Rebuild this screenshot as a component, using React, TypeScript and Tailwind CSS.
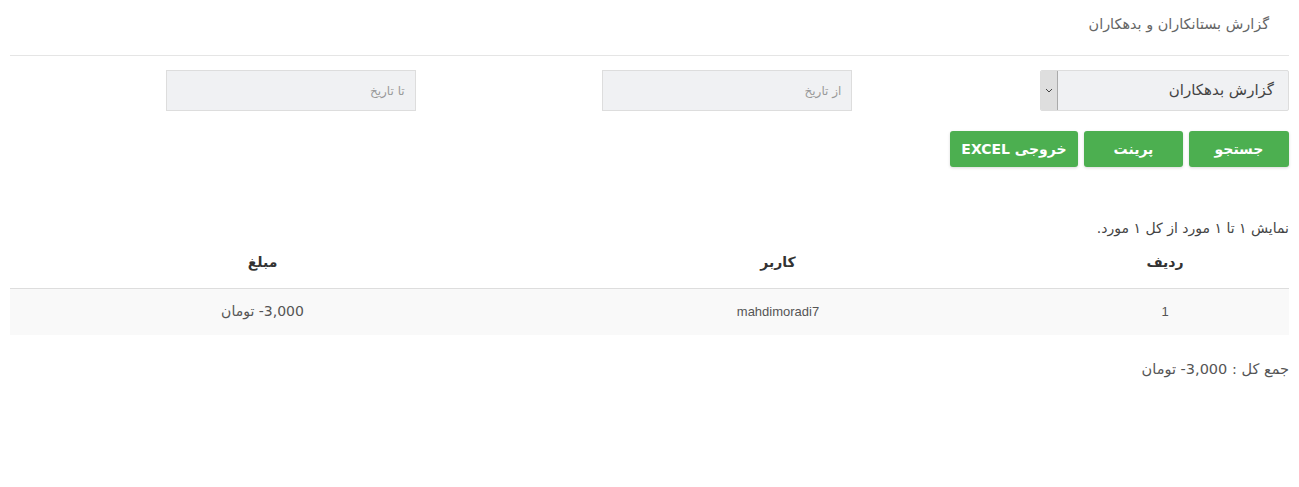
const fa = "font-['DejaVu_Sans','Noto_Sans',sans-serif]";

const rows = [{ id: "1", user: "mahdimoradi7", amount: "3,000- تومان" }];

export default function App() {
  return (
    <div dir="rtl" className={`min-h-[487px] bg-white px-[10px] text-[#555] ${fa}`}>
      <div className="px-[20px] pt-[14px] pb-[21px] text-[14.4px] leading-[20px] text-[#666]">
        گزارش بستانکاران و بدهکاران
      </div>
      <div className="border-t border-[#e5e5e5]" />

      <div className="mt-[14px] grid grid-cols-3 gap-x-[31px]">
        <div className="flex h-[41px] w-[249px] overflow-hidden rounded-[2px] border border-[#ddd] bg-[#f0f1f3]">
          <div className="flex flex-1 items-center pr-[14px] text-[15px] text-[#444]">گزارش بدهکاران</div>
          <div className="flex w-[17px] items-center justify-center border-r border-[#aaa] bg-[#dedede]">
            <svg width="8" height="5" viewBox="0 0 8 5">
              <path d="M1 1l3 3 3-3" fill="none" stroke="#444" strokeWidth="1" />
            </svg>
          </div>
        </div>
        <div className="flex h-[41px] w-[250px] items-center border border-[#ddd] bg-[#f0f1f3] pr-[10px] text-[12px] text-[#999]">
          از تاریخ
        </div>
        <div className="flex h-[41px] w-[250px] items-center border border-[#ddd] bg-[#f0f1f3] pr-[10px] text-[12px] text-[#999]">
          تا تاریخ
        </div>
      </div>

      <div className="mt-[20px] flex gap-[6px]">
        {[
          ["جستجو", "w-[100px]"],
          ["پرینت", "w-[99px]"],
          ["خروجی EXCEL", "w-[128px]"],
        ].map(([label, w]) => (
          <button
            key={label}
            className={`${w} h-[36px] rounded-[3px] bg-[#4caf50] text-[14px] font-bold text-white shadow-[0_1px_3px_rgba(0,0,0,0.15)]`}
          >
            {label}
          </button>
        ))}
      </div>

      <div className="mt-[51px] text-[14px] leading-[20px] text-[#444]">نمایش ۱ تا ۱ مورد از کل ۱ مورد.</div>

      <table className="w-full border-collapse text-[13px]">
        <thead>
          <tr className="border-b border-[#ddd] text-[14px] font-bold text-[#333]">
            <th className="h-[50px] w-[248px] text-center align-middle">ردیف</th>
            <th className="w-[526px] text-center">کاربر</th>
            <th className="text-center">مبلغ</th>
          </tr>
        </thead>
        <tbody>
          {rows.map((r) => (
            <tr key={r.id} className="bg-[#f9f9f9] text-[#555]">
              <td className="h-[47px] text-center font-['Liberation_Sans',sans-serif]">{r.id}</td>
              <td className="text-center font-['Liberation_Sans',sans-serif]">{r.user}</td>
              <td className="text-center text-[14px]">{r.amount}</td>
            </tr>
          ))}
        </tbody>
      </table>

      <div className="mt-[24px] text-[14.5px] leading-[20px] text-[#555]">جمع کل : 3,000- تومان</div>
    </div>
  );
}
